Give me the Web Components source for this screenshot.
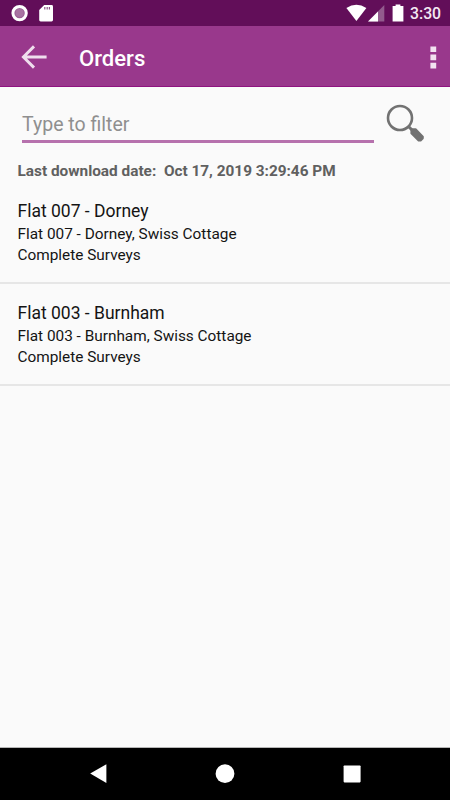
<!DOCTYPE html>
<html lang="en">
<head>
<meta charset="utf-8">
<title>Orders</title>
<style>
  body {
    margin: 0;
    font-family: Roboto, sans-serif;
    background: #fafafa;
  }
</style>
</head>
<body>
<orders-screen></orders-screen>

<script>
class StatusBar extends HTMLElement {
    constructor() {
        super();
        this.shadow = this.attachShadow({ mode: "open" });
    }

    connectedCallback() {
        this.shadow.innerHTML = `
      <style>
        :host {
          display: flex;
          justify-content: space-between;
          height: 26px;
          background-color: #620e59;
          color: #f4e9f3;
        }
        svg {
          display: block;
        }
        .right {
          display: flex;
        }
        .time {
          width: 40px;
          font-size: 15.8px;
          font-weight: 500;
          line-height: 28px;
          white-space: nowrap;
        }
      </style>
      <svg width="60" height="26" viewBox="0 0 60 26">
        <circle cx="19.6" cy="13.1" r="6.7" fill="#9c6096" stroke="#fff" stroke-width="3"/>
        <circle cx="19.6" cy="13.1" r="4" fill="#a873a2"/>
        <path fill="#fff" d="M44.2 5H51.6Q53 5 53 6.4V20Q53 21.4 51.6 21.4H40.6Q39.2 21.4 39.2 20V10Z"/>
        <path stroke="#8d5387" stroke-width="1.2" d="M44.8 7V9.4M47.2 7V9.4M49.4 7V9.4"/>
      </svg>
      <div class="right">
        <svg width="64" height="26" viewBox="346 0 64 26">
          <path fill="#fff" d="M346.4 8Q356.4 1.6 366.4 8L356.4 21Z"/>
          <path fill="#925b8d" d="M384.3 5V21.6H368Z"/>
          <path fill="#fff" d="M378 11.4V21.6H368Z"/>
          <path fill="#fff" d="M395.6 4.4H400.4V6H403.4V21.4H392.6V6H395.6Z"/>
        </svg>
        <div class="time">3:30</div>
      </div>
    `;
    }
}
customElements.define("status-bar", StatusBar);

class AppToolbar extends HTMLElement {
    constructor() {
        super();
        this.shadow = this.attachShadow({ mode: "open" });
    }

    connectedCallback() {
        this.shadow.innerHTML = `
      <style>
        :host {
          display: flex;
          align-items: center;
          box-sizing: border-box;
          height: 61px;
          background-color: #99388c;
          border-bottom: 1px solid #8f1480;
          color: #fff;
        }
        .title {
          flex: 1;
          padding-top: 4px;
          font-size: 22.1px;
          font-weight: 500;
          line-height: 26px;
        }
      </style>
      <svg width="79" height="60" viewBox="0 0 79 60">
        <path fill="none" stroke="#efdeed" stroke-width="2.9" d="M46.6 31H23.5M34 20.4L23.4 31L34 41.6"/>
      </svg>
      <div class="title"><slot></slot></div>
      <svg width="30" height="60" viewBox="420 0 30 60">
        <path fill="#f2e2f0" d="M430.4 20.4h5.8v5.6h-5.8zM430.4 28.6h5.8v5.6h-5.8zM430.4 36.8h5.8v5.8h-5.8z"/>
      </svg>
    `;
    }
}
customElements.define("app-toolbar", AppToolbar);

class FilterField extends HTMLElement {
    constructor() {
        super();
        this.shadow = this.attachShadow({ mode: "open" });
    }

    get hint() {
        return this.getAttribute("hint");
    }

    connectedCallback() {
        this.shadow.innerHTML = `
      <style>
        :host {
          display: flex;
          height: 66px;
          padding-left: 22px;
        }
        .field {
          box-sizing: border-box;
          width: 352px;
          height: 56px;
          padding-top: 26px;
          border-bottom: 3px solid #b671ad;
          color: #8f8f8f;
          font-size: 19.5px;
          line-height: 24px;
        }
      </style>
      <div class="field">${this.hint}</div>
      <svg width="60" height="60" viewBox="374 87 60 60">
        <circle cx="400" cy="118" r="12" fill="none" stroke="#727272" stroke-width="2.6"/>
        <path stroke="#727272" stroke-width="3" d="M408 126L412.5 130.5"/>
        <path fill="#727272" stroke="#727272" stroke-width="2" stroke-linejoin="round" d="M411.4 133.2V130.2L412.6 129.2H415.6L422.8 136.6V138.2L420.6 140.6H418.6Z"/>
      </svg>
    `;
    }
}
customElements.define("filter-field", FilterField);

class OrderRow extends HTMLElement {
    constructor() {
        super();
        this.shadow = this.attachShadow({ mode: "open" });
    }

    connectedCallback() {
        this.shadow.innerHTML = `
      <style>
        :host {
          display: block;
          box-sizing: border-box;
          height: 102.5px;
          padding: 17.9px 17.5px 0;
          border-bottom: 2px solid #e6e6e6;
          color: #141414;
          font-size: 15.37px;
          line-height: 21px;
        }
        .name {
          margin-bottom: 1px;
          font-size: 17.5px;
          line-height: 24px;
        }
      </style>
      <div class="name"><slot name="name"></slot></div>
      <div><slot name="address"></slot></div>
      <div><slot name="status"></slot></div>
    `;
    }
}
customElements.define("order-row", OrderRow);

class NavBar extends HTMLElement {
    constructor() {
        super();
        this.shadow = this.attachShadow({ mode: "open" });
    }

    connectedCallback() {
        this.shadow.innerHTML = `
      <style>
        :host {
          display: block;
          box-sizing: border-box;
          height: 53px;
          background-color: #000;
          border-top: 1px solid #b5b5b5;
        }
        svg {
          display: block;
        }
      </style>
      <svg width="450" height="52" viewBox="0 748 450 52">
        <path fill="#fff" d="M106.4 764.2V783L90.2 773.6Z"/>
        <circle cx="225" cy="773.7" r="9.4" fill="#fff"/>
        <rect x="343.6" y="765.4" width="17" height="17" rx="0.8" fill="#fff"/>
      </svg>
    `;
    }
}
customElements.define("nav-bar", NavBar);

class OrdersScreen extends HTMLElement {
    constructor() {
        super();
        this.shadow = this.attachShadow({ mode: "open" });
    }

    connectedCallback() {
        this.shadow.innerHTML = `
      <style>
        :host {
          display: flex;
          flex-direction: column;
          width: 450px;
          height: 800px;
          overflow: hidden;
          background-color: #fafafa;
        }
        .updated {
          height: 28px;
          padding: 0 17.5px;
          color: #606060;
          font-size: 15.37px;
          font-weight: 700;
          line-height: 36px;
          white-space: pre;
        }
        .list {
          flex: 1;
        }
      </style>
      <status-bar></status-bar>
      <app-toolbar>Orders</app-toolbar>
      <filter-field hint="Type to filter"></filter-field>
      <div class="updated">Last download date:  Oct 17, 2019 3:29:46 PM</div>
      <div class="list">
        <order-row>
          <span slot="name">Flat 007 - Dorney</span>
          <span slot="address">Flat 007 - Dorney, Swiss Cottage</span>
          <span slot="status">Complete Surveys</span>
        </order-row>
        <order-row>
          <span slot="name">Flat 003 - Burnham</span>
          <span slot="address">Flat 003 - Burnham, Swiss Cottage</span>
          <span slot="status">Complete Surveys</span>
        </order-row>
      </div>
      <nav-bar></nav-bar>
    `;
    }
}
customElements.define("orders-screen", OrdersScreen);
</script>
</body>
</html>
